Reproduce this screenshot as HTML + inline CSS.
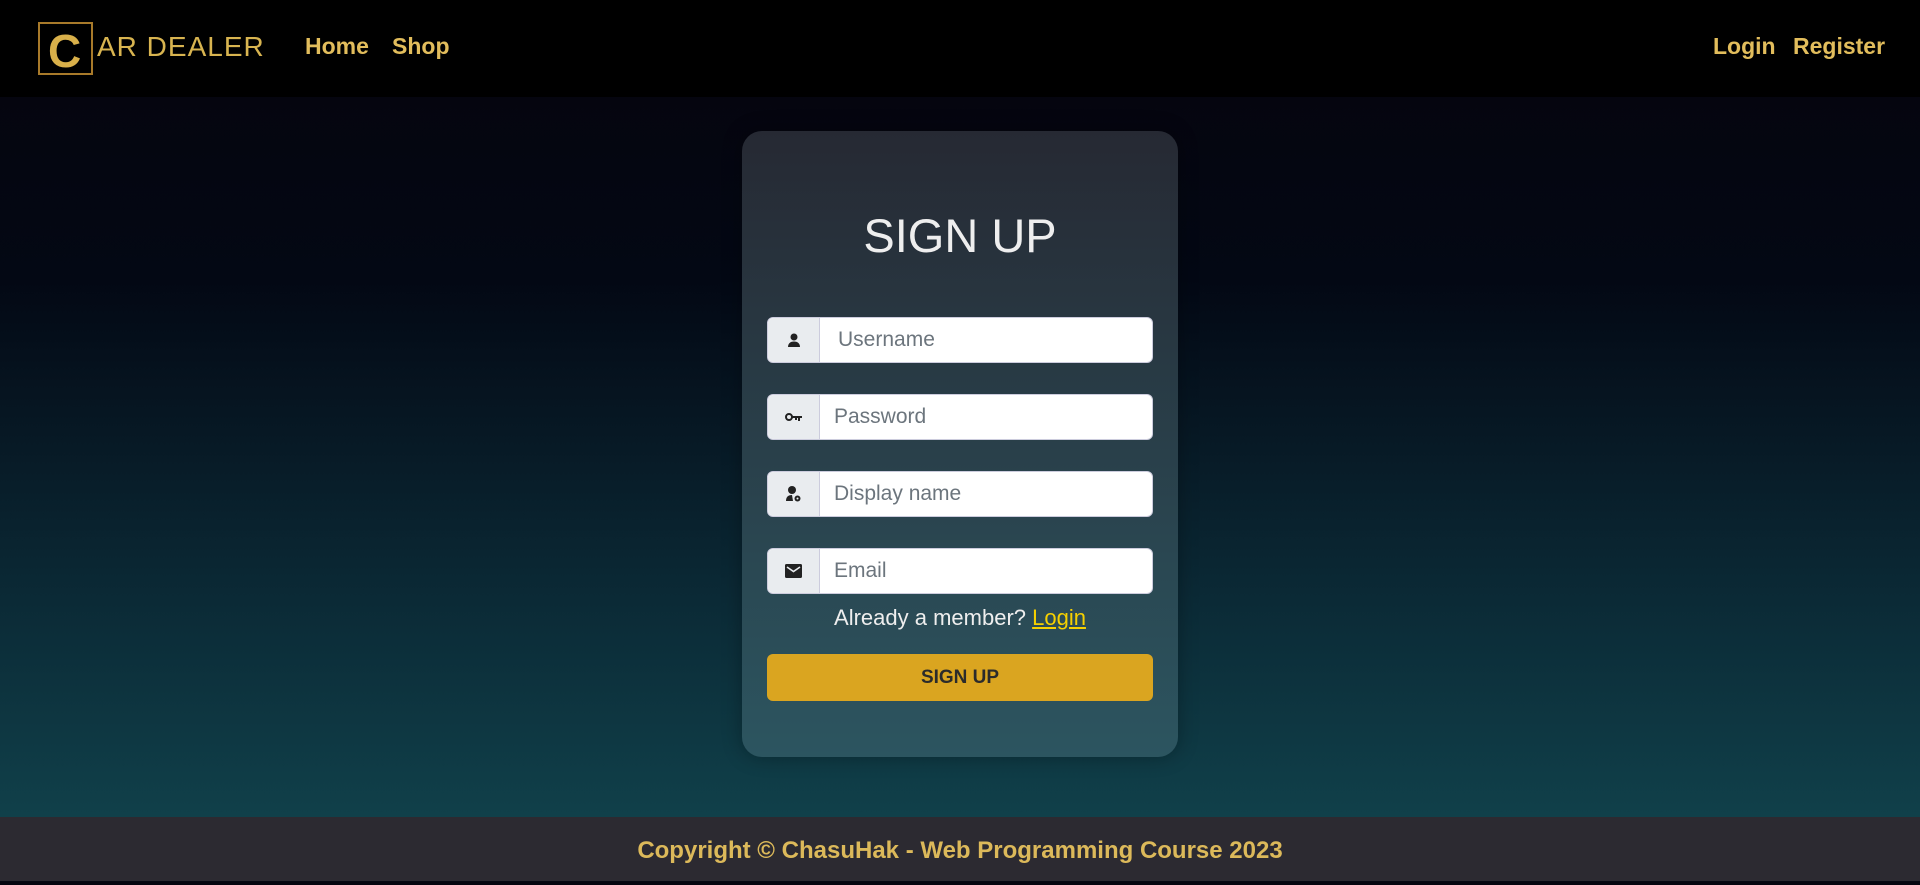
<!DOCTYPE html>
<html><head><meta charset="utf-8"><style>
*{box-sizing:border-box;margin:0;padding:0}
body{width:1920px;height:881px;overflow:hidden;font-family:"Liberation Sans",sans-serif;background:linear-gradient(#05050f 97px,#030814 280px,#0b2a36 600px,#10404a 817px);position:relative}
nav{position:absolute;left:0;top:0;width:1920px;height:97px;background:#000}
.logo{position:absolute;left:38px;top:22px;width:55px;height:53px;border:2px solid #a87a2a}
.logo span{position:absolute;left:8px;top:0px;font-size:46px;font-weight:bold;color:#d9b04a}
.brand{position:absolute;left:97px;top:31px;font-size:28px;color:#d8b450;letter-spacing:1px}
.nl{position:absolute;top:33px;font-size:23px;font-weight:bold;color:#e2bd5c}
.card{position:absolute;left:742px;top:131px;width:436px;height:626px;border-radius:20px;background:linear-gradient(#262933,#2c5560);box-shadow:0 0 20px rgba(0,0,0,.3)}
h1{position:absolute;width:436px;top:208px;text-align:center;color:#eee;font-size:47px;font-weight:normal}
.in{position:absolute;left:767px;width:386px;height:46px;background:#fff;border-radius:6px;border:1px solid #ccd}
.ad{position:absolute;left:0;top:0;width:52px;height:44px;background:#e9ecef;border-right:1px solid #ccd;border-radius:6px 0 0 6px;display:flex;align-items:center;justify-content:center}
.ph{position:absolute;left:66px;top:10px;font-size:21px;color:#6c757d}
.al{position:absolute;left:742px;width:436px;top:605px;text-align:center;color:#eee;font-size:22px}
.al u{color:#f5d000}
.btn{position:absolute;left:767px;top:654px;width:386px;height:47px;background:#daa520;border-radius:6px;text-align:center;line-height:47px;font-size:19px;font-weight:bold;color:#2b2b2b}
footer{position:absolute;left:0;top:817px;width:1920px;height:64px;background:#2c2a31;text-align:center;line-height:68px;color:#dcb95a;font-size:24px;font-weight:bold}
</style></head><body>
<nav>
<div class="logo"><span>C</span></div>
<div class="brand">AR DEALER</div>
<div class="nl" style="left:305px">Home</div>
<div class="nl" style="left:392px">Shop</div>
<div class="nl" style="left:1713px">Login</div>
<div class="nl" style="left:1793px">Register</div>
</nav>
<div class="card"></div>
<h1 style="left:742px">SIGN UP</h1>
<div class="in" style="top:317px"><div class="ad"><svg width="16" height="16" viewBox="0 0 16 16"><circle cx="8" cy="5" r="3.5" fill="#222"/><path d="M2 15c0-4 3-5.5 6-5.5s6 1.5 6 5.5z" fill="#222"/></svg></div><div class="ph" style="left:70px">Username</div></div>
<div class="in" style="top:394px"><div class="ad"><svg width="18" height="10" viewBox="0 0 18 10"><circle cx="4" cy="5" r="3" fill="none" stroke="#222" stroke-width="2"/><path d="M7 4h10v2h-2v3h-2V6h-1v2H10V6H7z" fill="#222"/></svg></div><div class="ph">Password</div></div>
<div class="in" style="top:471px"><div class="ad"><svg width="16" height="18" viewBox="0 0 16 18"><circle cx="6" cy="5" r="4" fill="#222"/><path d="M0 16c0-4 2-6 6-6l1 6z" fill="#222"/><circle cx="11.5" cy="13.5" r="3" fill="#222"/><circle cx="11.5" cy="13.5" r="1" fill="#e9ecef"/></svg></div><div class="ph">Display name</div></div>
<div class="in" style="top:548px"><div class="ad"><svg width="17" height="14" viewBox="0 0 17 14"><rect x="0" y="0" width="17" height="14" rx="1.5" fill="#222"/><path d="M2 3l6.5 4.5L15 3" fill="none" stroke="#e9ecef" stroke-width="1.6"/></svg></div><div class="ph">Email</div></div>
<div class="al">Already a member? <u>Login</u></div>
<div class="btn">SIGN UP</div>
<footer>Copyright © ChasuHak - Web Programming Course 2023</footer>
</body></html>
